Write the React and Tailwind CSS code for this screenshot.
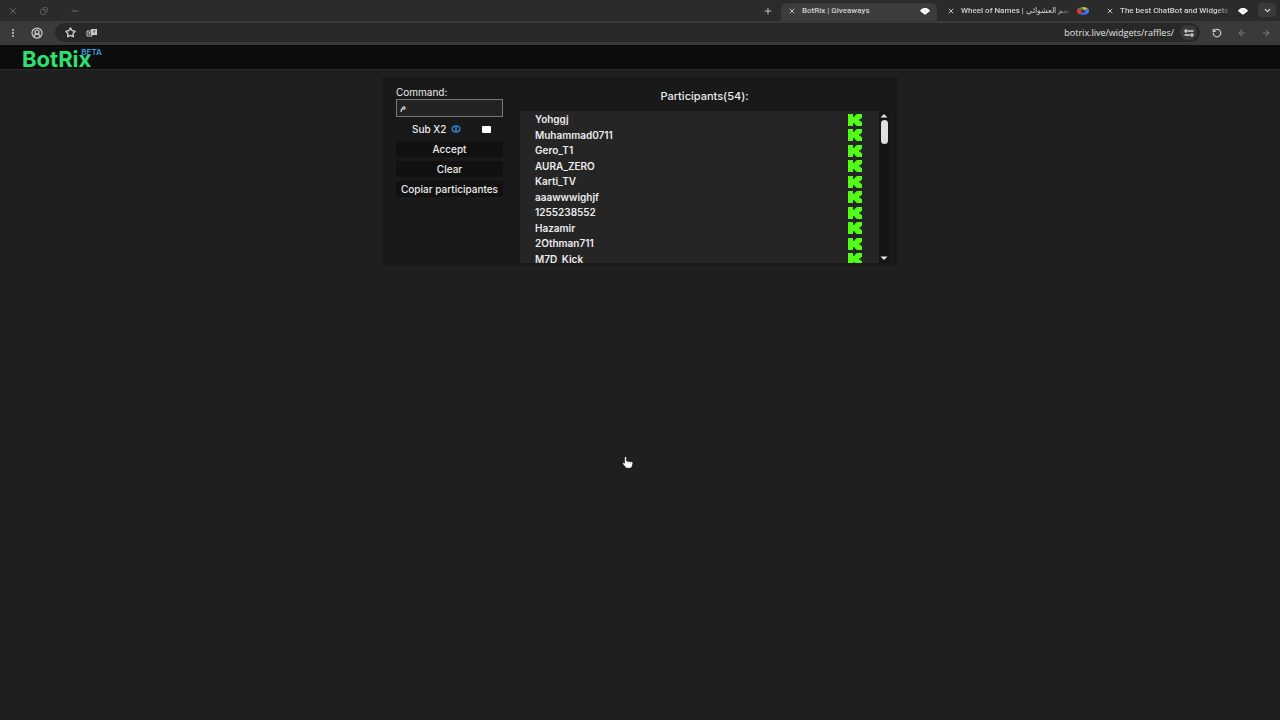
import { useState } from 'react'
import clsx from 'clsx'
import {
  X,
  Plus,
  Minus,
  Copy,
  ChevronDown,
  ArrowLeft,
  ArrowRight,
  RotateCcw,
  Star,
  CircleUserRound,
  EllipsisVertical,
} from 'lucide-react'

const participants = [
  'Yohggj',
  'Muhammad0711',
  'Gero_T1',
  'AURA_ZERO',
  'Karti_TV',
  'aaawwwighjf',
  '1255238552',
  'Hazamir',
  '2Othman711',
  'M7D_Kick',
]

const tabs = [
  { title: 'BotRix | Giveaways', icon: 'botrix', active: true },
  { title: 'Wheel of Names | سم العشوائي', icon: 'wheel', fade: true },
  { title: 'The best ChatBot and Widgets', icon: 'botrix', fade: true },
]

const BotrixIcon = () => (
  <svg width="10" height="8" viewBox="0 0 10 8" className="shrink-0">
    <path d="M3.500 1h3L9 2.500 10 4 8 5.500 5.500 7.500h-1L2 5.500 0 4l1-1.500z" fill="#fff" />
    <path d="M4.500 3.500l1.500 1" stroke="#999" strokeWidth="0.8" />
  </svg>
)

const WheelIcon = () => (
  <svg width="12" height="8" viewBox="0 0 12 8" className="shrink-0">
    <path d="M6 4L1 1.500A6 4 0 0 1 6 0z" fill="#2e9e45" />
    <path d="M6 4L6 0A6 4 0 0 1 11 1.500z" fill="#e8b62a" />
    <path d="M6 4L11 1.500A6 4 0 0 1 9 7.500z" fill="#3f78f0" />
    <path d="M6 4L9 7.500A6 4 0 0 1 3 7.500z" fill="#3469e0" />
    <path d="M6 4L3 7.500A6 4 0 0 1 1 1.500z" fill="#df3a32" />
    <ellipse cx="6" cy="4" rx="2" ry="1.500" fill="#333" />
  </svg>
)

const KickIcon = () => (
  <svg width="14" height="12" viewBox="0 0 14 12" className="shrink-0">
    <path
      d="M0 0h5v2.700h1.700V1.300h1.600V0H14v4h-1.200v1.300h-1.600v1.400h1.600V8H14v4H8.300v-1.300H6.700V9.300H5V12H0z"
      fill="#53fc18"
    />
  </svg>
)

const TranslateIcon = () => (
  <svg width="12" height="10" viewBox="0 0 12 10">
    <path d="M1 3h5v5H1z" fill="none" stroke="#c8c8c8" />
    <path d="M2 5h3M3.500 4v3" stroke="#c8c8c8" strokeWidth="0.8" />
    <path d="M5 1h6v6H5z" fill="#c8c8c8" />
    <path d="M7 3h2.500M8 2.500v2.500" stroke="#444" strokeWidth="0.7" />
  </svg>
)

const SettingsIcon = () => (
  <svg width="10" height="8" viewBox="0 0 10 8" fill="none" stroke="#d8d8d8" strokeWidth="1.300">
    <path d="M4 2h5.500M.5 6H6" />
    <circle cx="2" cy="2" r="1" />
    <circle cx="8" cy="6" r="1" />
  </svg>
)

const HandCursor = () => (
  <svg width="12" height="13" viewBox="0 0 12 13">
    <path
      d="M2.500 1.500C2.500.5 4.500.5 4.500 1.500V5l5 .8c1.200.2 1.500 1 1.300 2L10 10.500c-.5 1.200-1.300 1.700-2.500 1.700H5.500c-1 0-1.600-.4-2.200-1.200L.7 8c-.5-1 .6-1.700 1.800-.8z"
      fill="#fff"
      stroke="#111"
      strokeWidth="0.6"
    />
    <path d="M6.500 5.500v2M8.500 5.800v2" stroke="#999" strokeWidth="0.5" />
  </svg>
)

const Tab = ({ tab }) => (
  <div
    className={clsx(
      'mr-[3px] flex h-[18px] w-[156px] items-center gap-[5px] rounded-t-md pr-[7px] pb-[3px] pl-[6px]',
      tab.active && 'bg-[#3c3c3c]',
    )}
  >
    <button aria-label="Close tab" className="shrink-0 p-px text-[#c0c0c0]">
      <X size={8} strokeWidth={3} />
    </button>
    <span
      className={clsx(
        'flex-1 overflow-hidden font-[Roboto,"Noto_Sans",sans-serif] text-[8px] leading-3 font-medium whitespace-nowrap text-[#d0d0d0]',
        tab.fade && 'mask-r-from-85%',
      )}
    >
      {tab.title}
    </span>
    {tab.icon === 'wheel' ? <WheelIcon /> : <BotrixIcon />}
  </div>
)

const BrowserChrome = () => (
  <div className="bg-[#3a3a3a]">
    <div className="flex h-[21px] items-end bg-[#2b2b2b]">
      <div className="flex h-full flex-1 items-center gap-[22px] pl-2 text-[#777]">
        <button aria-label="Close"><X size={10} strokeWidth={2} /></button>
        <button aria-label="Restore"><Copy size={8} className="-scale-x-100" /></button>
        <button aria-label="Minimize"><Minus size={10} strokeWidth={2} /></button>
      </div>
      <button aria-label="New tab" className="mr-2 flex h-full items-center text-[#c0c0c0]">
        <Plus size={10} strokeWidth={2.500} />
      </button>
      {tabs.map(tab => <Tab key={tab.title} tab={tab} />)}
      <button
        aria-label="Search tabs"
        className="mr-1 mb-1 flex h-[14px] w-[18px] items-center justify-center rounded bg-[#3a3a3a] text-[#e0e0e0]"
      >
        <ChevronDown size={9} strokeWidth={3} />
      </button>
    </div>

    <div className="flex h-6 items-center pb-px text-[#c8c8c8]">
      <div className="flex w-[55px] items-center gap-[13px] pl-2">
        <button aria-label="Menu"><EllipsisVertical size={10} strokeWidth={3} /></button>
        <button aria-label="Profile"><CircleUserRound size={12} strokeWidth={2.500} /></button>
      </div>
      <div className="flex h-[19px] flex-1 items-center gap-[10px] rounded-full bg-[#282828] pr-[3px] pl-[10px]">
        <button aria-label="Bookmark"><Star size={11} strokeWidth={3} /></button>
        <button aria-label="Translate"><TranslateIcon /></button>
        <input
          aria-label="Address"
          defaultValue="botrix.live/widgets/raffles/"
          className="min-w-0 flex-1 bg-transparent text-right font-['Open_Sans',sans-serif] text-[9px] leading-3 text-[#e4e4e4] outline-none"
        />
        <button
          aria-label="Site settings"
          className="-ml-1 flex h-[15px] w-[17px] items-center justify-center rounded-full bg-[#3a3a3a]"
        >
          <SettingsIcon />
        </button>
      </div>
      <div className="flex w-20 items-center justify-between pr-[9px] pl-3">
        <button aria-label="Reload"><RotateCcw size={10} strokeWidth={3} /></button>
        <button aria-label="Forward" className="text-[#777]"><ArrowLeft size={10} strokeWidth={2.500} /></button>
        <button aria-label="Back" className="text-[#777]"><ArrowRight size={10} strokeWidth={2.500} /></button>
      </div>
    </div>
  </div>
)

const SideButton = ({ children }) => (
  <button className="h-4 w-full bg-[#111] text-[10px] leading-4 font-medium whitespace-nowrap">
    {children}
  </button>
)

const CommandForm = () => {
  const [command, setCommand] = useState('م')
  const [double, setDouble] = useState(false)

  return (
    <form className="w-[107px] shrink-0 pt-2" onSubmit={e => e.preventDefault()}>
      <label htmlFor="command" className="block text-[10px] leading-[14px]">Command:</label>
      <input
        id="command"
        value={command}
        onChange={e => setCommand(e.target.value)}
        className="block h-[18px] w-full border border-[#777] bg-[#232323] px-[3px] pb-1 text-[10px] leading-3 outline-none"
      />
      <div className="mt-1 mb-1 flex h-4 items-center pr-3 pl-4">
        <label htmlFor="double" className="text-[10px] font-medium">Sub X2</label>
        <svg width="10" height="8" viewBox="0 0 10 8" className="ml-1">
          <ellipse cx="5" cy="4" rx="4" ry="3" fill="none" stroke="#2c87d8" strokeWidth="1.300" />
          <path d="M5 2v4" stroke="#2c87d8" strokeWidth="1.500" />
        </svg>
        <input
          id="double"
          type="checkbox"
          checked={double}
          onChange={e => setDouble(e.target.checked)}
          className="ml-auto h-[7px] w-[9px] appearance-none rounded-[1px] bg-white checked:bg-[#2c87d8]"
        />
      </div>
      <div className="flex flex-col gap-1">
        <SideButton>Accept</SideButton>
        <SideButton>Clear</SideButton>
        <SideButton>Copiar participantes</SideButton>
      </div>
    </form>
  )
}

const Scrollbar = () => (
  <div className="flex w-[10px] flex-col items-center bg-[#151515] py-[3px]">
    <svg width="8" height="4" viewBox="0 0 8 4"><path d="M4 0l3.500 3.500h-7z" fill="#e4e4e4" /></svg>
    <div className="mt-[2px] h-6 w-[7px] rounded-full bg-[#dedede]" />
    <svg width="8" height="4" viewBox="0 0 8 4" className="mt-auto">
      <path d="M4 4L.5.5h7z" fill="#e4e4e4" />
    </svg>
  </div>
)

const Participants = () => (
  <section className="min-w-0 flex-1">
    <h2 className="flex h-[34px] items-center justify-center pt-[3px] text-[11px] leading-4 font-medium">
      Participants(54):
    </h2>
    <div className="flex h-[152px]">
      <div className="flex-1 overflow-hidden bg-[#252525] pt-px pr-[17px] pl-[15px]">
        <ul className="flex h-[155px] flex-col">
          {participants.map(name => (
            <li key={name} className="flex flex-1 items-center justify-between text-[10px] leading-[15px] font-semibold">
              <span>{name}</span>
              <KickIcon />
            </li>
          ))}
        </ul>
      </div>
      <Scrollbar />
    </div>
  </section>
)

export default function App() {
  return (
    <div className="min-h-screen bg-[#1f1f1f] font-[Inter,'Noto_Sans',sans-serif] text-[#ececec]">
      <BrowserChrome />
      <header className="flex h-[25px] items-center border-b border-[#2a2a2a] bg-[#0d0d0d] pt-[3px] pl-[22px]">
        <a href="#" className="flex items-start text-[22px] leading-5 font-bold text-[#2fe070]">
          BotRix
          <sup className="top-0 -mt-[3px] -ml-[10px] text-[8px] leading-3 font-semibold text-[#3d9be0]">BETA</sup>
        </a>
      </header>
      <main className="pt-[7px]">
        <div className="mx-auto flex w-[516px] gap-[17px] bg-[#191919] pr-[9px] pb-[3px] pl-[14px]">
          <CommandForm />
          <Participants />
        </div>
      </main>
      <div className="pointer-events-none absolute top-[456px] left-[622px]">
        <HandCursor />
      </div>
    </div>
  )
}
